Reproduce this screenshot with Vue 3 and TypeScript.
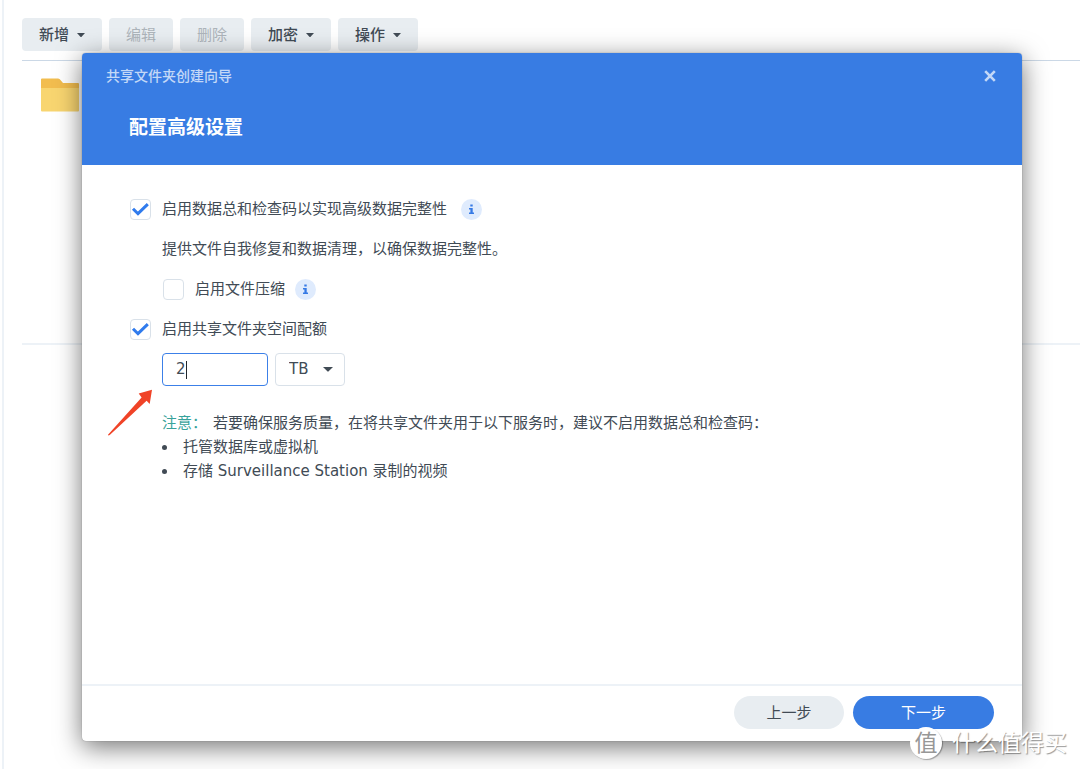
<script setup lang="ts">
import { ref } from 'vue'

interface ToolbarAction {
  label: string
  menu: boolean
  disabled: boolean
}

const actions: ToolbarAction[] = [
  { label: '新增', menu: true, disabled: false },
  { label: '编辑', menu: false, disabled: true },
  { label: '删除', menu: false, disabled: true },
  { label: '加密', menu: true, disabled: false },
  { label: '操作', menu: true, disabled: false },
]

const checksum = ref(true)
const compression = ref(false)
const quota = ref(true)
const quotaSize = ref('2')
const quotaUnit = ref('TB')

const cautions: string[] = ['托管数据库或虚拟机', '存储 Surveillance Station 录制的视频']
</script>

<template>
  <div class="desktop">
    <main class="panel">
      <div class="toolbar">
        <button
          v-for="action in actions"
          :key="action.label"
          type="button"
          class="tool"
          :disabled="action.disabled"
        >
          {{ action.label }}
          <svg v-if="action.menu" class="tool-caret" viewBox="0 0 8 4" aria-hidden="true">
            <path d="M0 0h8L4.6 3.7q-.6.6-1.2 0z" fill="currentColor" />
          </svg>
        </button>
      </div>
      <div class="folders">
        <svg class="folder" viewBox="0 0 38 34" aria-hidden="true">
          <path d="M0 1.5Q0 .5 1 .5H17Q18 .5 18.8 1.3L22 5H37Q38 5 38 6V12H0Z" fill="#f2bd4f" />
          <path d="M0 10H38V32.5Q38 33.5 37 33.5H1Q0 33.5 0 32.5Z" fill="#f8d570" />
        </svg>
      </div>
    </main>

    <section class="dialog" role="dialog" aria-labelledby="dialog-title">
      <header class="head">
        <div class="head-bar">
          <span id="dialog-title">共享文件夹创建向导</span>
          <button type="button" class="close" aria-label="关闭">
            <svg viewBox="0 0 12 12" aria-hidden="true">
              <path d="M1.2 1.2 10.8 10.8M10.8 1.2 1.2 10.8" stroke="currentColor" stroke-width="2.6" />
            </svg>
          </button>
        </div>
        <h1>配置高级设置</h1>
      </header>

      <form class="body" @submit.prevent>
        <div class="row">
          <input id="checksum" v-model="checksum" type="checkbox" class="check" />
          <label for="checksum">启用数据总和检查码以实现高级数据完整性</label>
          <svg class="info wide" viewBox="0 0 21 21" aria-hidden="true">
            <circle cx="10.5" cy="10.5" r="10.5" fill="#dfebfd" />
            <path d="M9.3 5.4h2.4v2.2H9.3zM8 9h3.7v4.4H13V15H8v-1.6h1.4v-2.8H8z" fill="#367ae5" />
          </svg>
        </div>
        <p class="row nested">提供文件自我修复和数据清理，以确保数据完整性。</p>
        <div class="row nested">
          <input id="compression" v-model="compression" type="checkbox" class="check" />
          <label for="compression">启用文件压缩</label>
          <svg class="info" viewBox="0 0 21 21" aria-hidden="true">
            <circle cx="10.5" cy="10.5" r="10.5" fill="#dfebfd" />
            <path d="M9.3 5.4h2.4v2.2H9.3zM8 9h3.7v4.4H13V15H8v-1.6h1.4v-2.8H8z" fill="#367ae5" />
          </svg>
        </div>
        <div class="row">
          <input id="quota" v-model="quota" type="checkbox" class="check" />
          <label for="quota">启用共享文件夹空间配额</label>
        </div>
        <div class="row nested quota">
          <div class="size">
            <input v-model="quotaSize" type="text" aria-label="配额大小" />
            <span class="text-caret"></span>
          </div>
          <div class="unit">
            <select v-model="quotaUnit" aria-label="配额单位">
              <option>MB</option>
              <option>GB</option>
              <option>TB</option>
            </select>
            <svg viewBox="0 0 12 6" aria-hidden="true">
              <path d="M0 0h12L6.8 5.2q-.8.8-1.6 0z" fill="#414b55" />
            </svg>
          </div>
          <svg class="pointer" viewBox="0 0 46 48" aria-hidden="true">
            <path d="M45 .7 42.7 15 39.6 11.8 3 45.7Q1.3 47 1 45.8L34.6 8.6 31.7 4.5Z" fill="#f04327" />
          </svg>
        </div>
        <div class="note">
          <p><span class="note-tag">注意：</span>若要确保服务质量，在将共享文件夹用于以下服务时，建议不启用数据总和检查码：</p>
          <ul>
            <li v-for="item in cautions" :key="item">{{ item }}</li>
          </ul>
        </div>
      </form>

      <footer class="foot">
        <button type="button" class="pill prev">上一步</button>
        <button type="button" class="pill next">下一步</button>
      </footer>
    </section>

    <div class="watermark"><span class="seal">值</span><span class="brand">什么值得买</span></div>
  </div>
</template>

<style>
body {
  margin: 0;
  background: #fff;
}
</style>

<style scoped>
* {
  box-sizing: border-box;
}

.desktop {
  position: relative;
  min-height: 100vh;
  display: flex;
  overflow: hidden;
  color: #414b55;
  font: 15px/24px 'DejaVu Sans', 'Noto Sans CJK SC', sans-serif;
}

button,
input,
select {
  font: inherit;
  color: inherit;
  margin: 0;
}

button {
  border: 0;
  padding: 0;
}

p,
ul,
h1 {
  margin: 0;
  padding: 0;
}

.panel {
  flex: 1;
  margin-left: 2px;
  border-left: 2px solid #edf2f7;
  padding: 18px 0 0 18px;
}

.toolbar {
  display: flex;
  gap: 7px;
  padding-bottom: 9px;
  border-bottom: 1px solid #cbd8e6;
}

.tool {
  display: flex;
  align-items: center;
  gap: 8px;
  height: 33px;
  padding: 0 17px;
  border-radius: 4px;
  background: #e8edf1;
  font-weight: 500;
}

.tool:disabled {
  color: #adb4ba;
  font-weight: 400;
}

.tool-caret {
  width: 8px;
  height: 4px;
}

.folders {
  height: 284px;
  padding: 17px 19px;
  border-bottom: 2px solid #edf2f7;
}

.folder {
  display: block;
  width: 38px;
  height: 34px;
}

.dialog {
  position: absolute;
  inset: 53px 58px 28px 82px;
  display: flex;
  flex-direction: column;
  border-radius: 4px;
  background: #fff;
  box-shadow: 0 6px 26px rgba(0, 0, 0, 0.55), 0 0 1px rgba(0, 0, 0, 0.5);
}

.head {
  padding: 11px 25px 24px 24px;
  border-radius: 4px 4px 0 0;
  background: #387ce3;
  color: #fff;
}

.head-bar {
  display: flex;
  align-items: center;
  justify-content: space-between;
  color: #c3d8f7;
  font-size: 14px;
  font-weight: 500;
}

.close {
  width: 14px;
  height: 14px;
  display: grid;
  place-items: center;
  background: none;
}

.close svg {
  width: 12px;
  height: 12px;
}

h1 {
  margin: 25px 0 0 23px;
  font-size: 19px;
  line-height: 28px;
  font-weight: 700;
}

.body {
  flex: 1;
  padding: 24px 48px;
}

.row {
  display: flex;
  align-items: center;
  height: 40px;
}

.nested {
  margin-left: 32px;
}

.check {
  appearance: none;
  width: 21px;
  height: 21px;
  margin-right: 11px;
  border: 1px solid #d9e1e9;
  border-radius: 4px;
  background: #fff;
}

.nested .check {
  margin-left: 1px;
}

.check:checked {
  background: #fff url("data:image/svg+xml,%3Csvg xmlns='http://www.w3.org/2000/svg' viewBox='0 0 19 19'%3E%3Cpath d='M2 8.7 7 13.7 16.8 4.2' fill='none' stroke='%23307bed' stroke-width='3'/%3E%3C/svg%3E") center / 19px 19px;
}

.info {
  width: 21px;
  height: 21px;
  margin-left: 10px;
}

.info.wide {
  margin-left: 14px;
}

.quota {
  position: relative;
  gap: 7px;
}

.size,
.unit {
  position: relative;
  height: 33px;
}

.size {
  width: 106px;
}

.size input {
  width: 100%;
  height: 100%;
  padding: 0 13px;
  border: 1px solid #3c80e8;
  border-radius: 4px;
  outline: 0;
  background: #fff;
}

.text-caret {
  position: absolute;
  left: 24px;
  top: 8px;
  width: 1px;
  height: 18px;
  background: #20262c;
}

.unit {
  width: 70px;
}

.unit select {
  appearance: none;
  width: 100%;
  height: 100%;
  padding: 0 13px;
  border: 1px solid #d9e1e9;
  border-radius: 4px;
  background: #fff;
}

.unit svg {
  position: absolute;
  right: 12px;
  top: 14px;
  width: 10px;
  height: 5px;
  pointer-events: none;
}

.pointer {
  position: absolute;
  left: -55px;
  top: 40px;
  width: 46px;
  height: 48px;
}

.note {
  margin: 22px 0 0 32px;
}

.note-tag {
  margin-right: 6px;
  color: #38a39b;
}

.note ul {
  list-style: none;
}

.note li {
  display: flex;
  align-items: center;
  gap: 16px;
}

.note li::before {
  content: '';
  width: 5px;
  height: 5px;
  border-radius: 50%;
  background: #414b55;
}

.foot {
  display: flex;
  justify-content: flex-end;
  gap: 9px;
  padding: 10px 28px 12px;
  border-top: 2px solid #edf2f7;
}

.pill {
  width: 110px;
  height: 33px;
  border-radius: 17px;
  background: #e8edf1;
}

.next {
  width: 141px;
  background: #387ce3;
  color: #fff;
}

.watermark {
  position: absolute;
  right: 13px;
  bottom: 10px;
  display: flex;
  align-items: center;
  gap: 10px;
  color: #fff;
  font-size: 23px;
  line-height: 32px;
  text-shadow: 1px 1px 1px rgba(0, 0, 0, 0.4);
}

.seal {
  width: 32px;
  height: 32px;
  border-radius: 50%;
  background: #fff;
  box-shadow: 1px 1px 1px rgba(0, 0, 0, 0.3);
  color: #979797;
  text-align: center;
  text-shadow: none;
}
</style>
